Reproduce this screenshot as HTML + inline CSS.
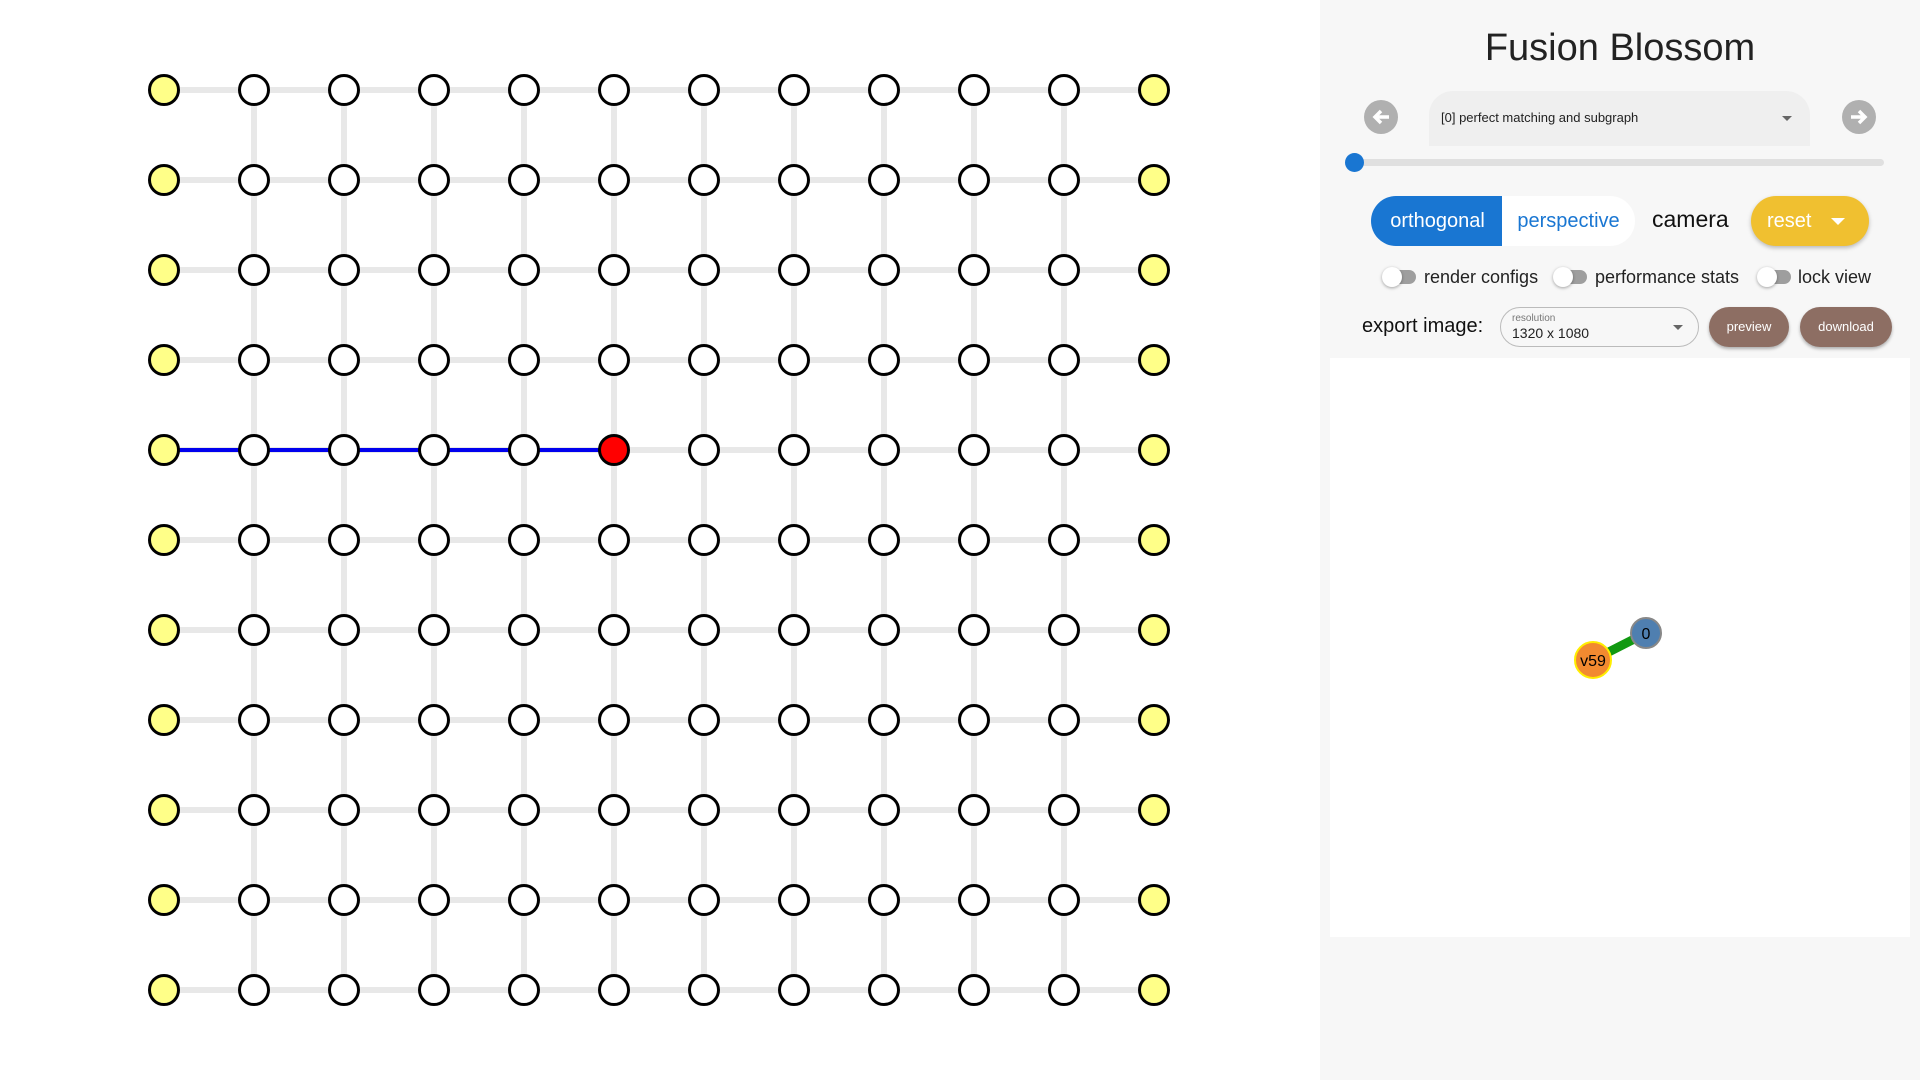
<!DOCTYPE html>
<html><head><meta charset="utf-8"><style>
html,body{margin:0;padding:0;width:1920px;height:1080px;overflow:hidden;background:#fff;font-family:"Liberation Sans",sans-serif;}
.a{position:absolute;}
#panel{left:1320px;top:0;width:600px;height:1080px;background:#f7f7f7;}
.sw{position:absolute;width:34px;height:14px;}
.sw .t{position:absolute;left:6px;top:0;width:28px;height:14px;border-radius:7px;background:#9e9e9e;}
.sw .k{position:absolute;left:0;top:-3px;width:20px;height:20px;border-radius:50%;background:#fff;box-shadow:0 1px 3px rgba(0,0,0,.35);}
.lbl{position:absolute;font-size:18px;color:#222;}
.btn{position:absolute;background:#8d6e63;color:#fff;border-radius:20px;font-size:13px;text-align:center;line-height:40px;box-shadow:0 2px 3px rgba(0,0,0,.3);}
</style></head><body>
<svg class="a" style="left:0;top:0" width="1320" height="1080">
<g stroke="#e8e8e8" stroke-width="6">
<line x1="164" y1="90" x2="1154" y2="90"/><line x1="164" y1="180" x2="1154" y2="180"/><line x1="164" y1="270" x2="1154" y2="270"/><line x1="164" y1="360" x2="1154" y2="360"/><line x1="164" y1="450" x2="1154" y2="450"/><line x1="164" y1="540" x2="1154" y2="540"/><line x1="164" y1="630" x2="1154" y2="630"/><line x1="164" y1="720" x2="1154" y2="720"/><line x1="164" y1="810" x2="1154" y2="810"/><line x1="164" y1="900" x2="1154" y2="900"/><line x1="164" y1="990" x2="1154" y2="990"/>
<line x1="254" y1="90" x2="254" y2="990"/><line x1="344" y1="90" x2="344" y2="990"/><line x1="434" y1="90" x2="434" y2="990"/><line x1="524" y1="90" x2="524" y2="990"/><line x1="614" y1="90" x2="614" y2="990"/><line x1="704" y1="90" x2="704" y2="990"/><line x1="794" y1="90" x2="794" y2="990"/><line x1="884" y1="90" x2="884" y2="990"/><line x1="974" y1="90" x2="974" y2="990"/><line x1="1064" y1="90" x2="1064" y2="990"/>
</g>
<line x1="164" y1="450" x2="614" y2="450" stroke="#0000ee" stroke-width="4"/>
<g id="nodes" stroke="#000" stroke-width="3"></g>
</svg>
<script>
var g=document.getElementById('nodes'),s='';
for(var r=0;r<11;r++)for(var c=0;c<12;c++){var x=164+c*90,y=90+r*90;var f=(c==0||c==11)?'#ffff88':'#fff';if(r==4&&c==5)f='#ff0000';s+='<circle cx="'+x+'" cy="'+y+'" r="14.5" fill="'+f+'"/>';}
g.innerHTML=s;
</script>
<div id="panel" class="a">
<div class="a" style="left:0;width:600px;top:27px;text-align:center;font-size:38px;color:#222;">Fusion Blossom</div>
<div class="a" style="left:44px;top:100px;width:34px;height:34px;border-radius:50%;background:#b0b0b0;"><svg width="34" height="34"><path d="M25 17H11M17 11l-6 6 6 6" stroke="#fff" stroke-width="3.5" fill="none"/></svg></div>
<div class="a" style="left:522px;top:100px;width:34px;height:34px;border-radius:50%;background:#b0b0b0;"><svg width="34" height="34"><path d="M9 17h14M17 11l6 6-6 6" stroke="#fff" stroke-width="3.5" fill="none"/></svg></div>
<div class="a" style="left:109px;top:91px;width:381px;height:55px;background:#efefef;border-radius:24px 24px 0 0;">
<div class="a" style="left:12px;top:19px;font-size:13px;color:#222;">[0] perfect matching and subgraph</div>
<div class="a" style="left:353px;top:25px;width:0;height:0;border-left:5px solid transparent;border-right:5px solid transparent;border-top:5px solid #666;"></div>
</div>
<div class="a" style="left:34px;top:159px;width:530px;height:7px;border-radius:4px;background:#e0e0e0;"></div>
<div class="a" style="left:25px;top:153px;width:19px;height:19px;border-radius:50%;background:#1976d2;"></div>
<div class="a" style="left:51px;top:196px;width:264px;height:50px;border-radius:25px;background:#fff;overflow:hidden;">
<div class="a" style="left:0;top:0;width:129px;height:50px;background:#1976d2;color:#fff;font-size:20px;line-height:50px;text-align:center;padding-left:2px;">orthogonal</div>
<div class="a" style="left:131px;top:0;width:133px;height:50px;color:#1976d2;font-size:20px;line-height:50px;text-align:center;">perspective</div>
</div>
<div class="a" style="left:332px;top:206px;font-size:23px;color:#111;">camera</div>
<div class="a" style="left:431px;top:196px;width:118px;height:50px;border-radius:25px;background:#f0c030;color:#fff;font-size:20px;line-height:50px;box-shadow:0 2px 4px rgba(0,0,0,.25);">
<span style="position:absolute;left:16px;">reset</span>
<div class="a" style="left:80px;top:22px;border-left:7px solid transparent;border-right:7px solid transparent;border-top:7px solid #fff;"></div></div>
<div class="sw" style="left:62px;top:270px"><div class="t"></div><div class="k"></div></div>
<div class="lbl" style="left:104px;top:267px">render configs</div>
<div class="sw" style="left:233px;top:270px"><div class="t"></div><div class="k"></div></div>
<div class="lbl" style="left:275px;top:267px">performance stats</div>
<div class="sw" style="left:437px;top:270px"><div class="t"></div><div class="k"></div></div>
<div class="lbl" style="left:478px;top:267px">lock view</div>
<div class="a" style="left:42px;top:315px;font-size:20px;color:#111;">export image:</div>
<div class="a" style="left:180px;top:307px;width:197px;height:38px;border:1px solid #bbb;border-radius:20px;">
<div class="a" style="left:11px;top:5px;font-size:10px;color:#777;">resolution</div>
<div class="a" style="left:11px;top:17px;font-size:14px;color:#222;">1320 x 1080</div>
<div class="a" style="left:172px;top:17px;border-left:5px solid transparent;border-right:5px solid transparent;border-top:5px solid #666;"></div>
</div>
<div class="btn" style="left:389px;top:307px;width:80px;height:40px;">preview</div>
<div class="btn" style="left:480px;top:307px;width:92px;height:40px;">download</div>
<div class="a" style="left:10px;top:358px;width:580px;height:579px;background:#fff;"></div>
<svg class="a" style="left:0;top:0" width="600" height="1080">
<line x1="273" y1="660" x2="326" y2="633" stroke="#119911" stroke-width="9"/>
<circle cx="326" cy="633" r="15" fill="#4f7fb0" stroke="#888" stroke-width="2"/>
<text x="326" y="639" font-size="16" text-anchor="middle" font-family="Liberation Sans">0</text>
<circle cx="273" cy="660" r="18" fill="#f28a30" stroke="#ffee00" stroke-width="2"/>
<text x="273" y="666" font-size="16" text-anchor="middle" font-family="Liberation Sans">v59</text>
</svg>
</div>
</body></html>
